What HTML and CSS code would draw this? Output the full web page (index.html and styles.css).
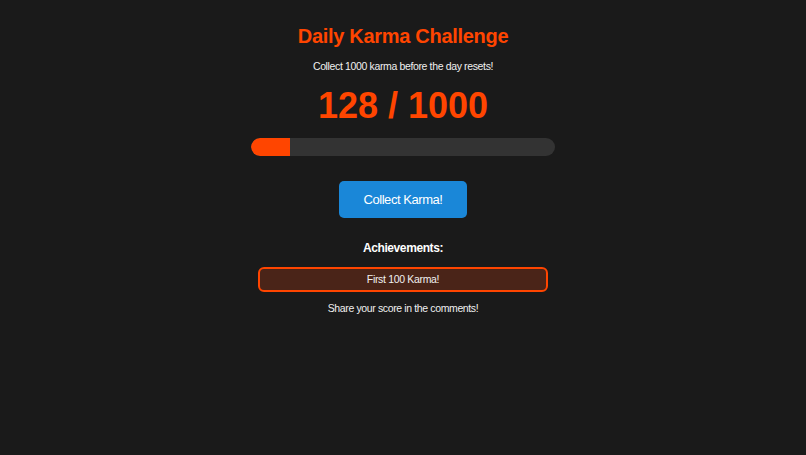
FILE: index.html
```html
<!DOCTYPE html>
<html>
<head>
<meta charset="utf-8">
<link rel="stylesheet" href="styles.css">
</head>
<body>
<div class="container">
  <h1 class="title">Daily Karma Challenge</h1>
  <p class="subtitle">Collect 1000 karma before the day resets!</p>
  <div class="counter">128 / 1000</div>
  <div class="progress"><div class="fill" style="width:12.8%"></div></div>
  <button class="collect">Collect Karma!</button>
  <h3 class="ach-title">Achievements:</h3>
  <div class="ach-list">
    <div class="ach">First 100 Karma!</div>
  </div>
  <p class="share">Share your score in the comments!</p>
</div>
</body>
</html>
```
FILE: styles.css
```css
html, body {
  margin: 0;
  padding: 0;
  background: #1a1a1a;
  color: #ffffff;
  font-family: "Liberation Sans", Arial, sans-serif;
}
.container {
  width: 304px;
  margin: 0 auto;
  padding-top: 25px;
  display: flex;
  flex-direction: column;
  align-items: center;
  text-align: center;
}
.title {
  color: #ff4500;
  font-size: 20px;
  letter-spacing: -0.3px;
  font-weight: bold;
  margin: 0;
  line-height: 23px;
}
.subtitle {
  font-size: 10.5px;
  letter-spacing: -0.36px;
  margin: 12px 0 0;
  line-height: 13px;
  color: #f0f0f0;
}
.counter {
  color: #ff4500;
  font-size: 36px;
  font-weight: bold;
  line-height: 41px;
  margin-top: 12px;
}
.progress {
  width: 100%;
  height: 18px;
  background: #333333;
  border-radius: 9px;
  overflow: hidden;
  margin-top: 12px;
}
.fill {
  height: 100%;
  background: #ff4500;
  border-radius: 9px 0 0 9px;
}
.collect {
  margin-top: 25px;
  width: 128px;
  height: 37px;
  background: #1a87d8;
  color: #ffffff;
  border: none;
  border-radius: 5px;
  font-family: "Liberation Sans", Arial, sans-serif;
  font-size: 13px;
  letter-spacing: -0.45px;
  padding: 0;
}
.ach-title {
  font-size: 12px;
  letter-spacing: -0.4px;
  font-weight: bold;
  margin: 23px 0 0;
  line-height: 15px;
}
.ach-list {
  width: 290px;
  margin-top: 11px;
}
.ach {
  height: 21px;
  line-height: 21px;
  background: #4a2418;
  border: 2px solid #ff4500;
  border-radius: 6px;
  font-size: 10.5px;
  letter-spacing: -0.33px;
  color: #f0f0f0;
}
.share {
  font-size: 10.5px;
  letter-spacing: -0.37px;
  line-height: 13px;
  margin: 10px 0 0;
  color: #f0f0f0;
}
```
